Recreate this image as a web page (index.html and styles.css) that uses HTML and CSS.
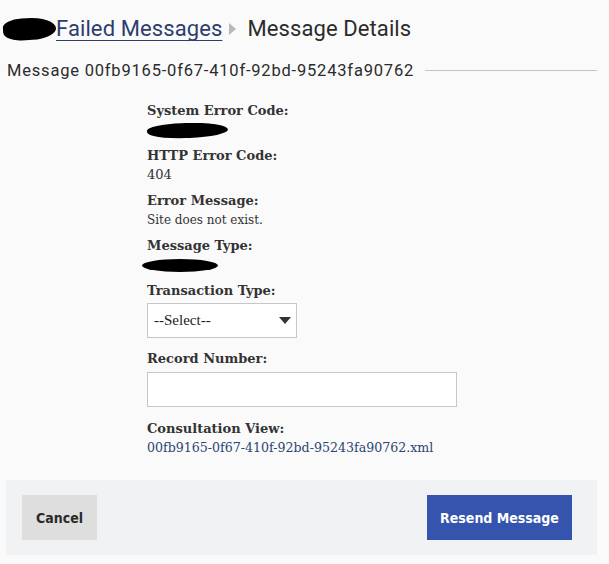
FILE: index.html
```html
<!DOCTYPE html>
<html>
<head>
<meta charset="utf-8">
<link rel="stylesheet" href="styles.css">
</head>
<body>
<div class="page">
  <h1 class="crumbs">
    <span class="redact redact-title"></span><a class="crumb-link" href="#">Failed Messages</a>
    <span class="chev"></span>
    <span class="crumb-current">Message Details</span>
  </h1>
  <div class="subtitle">
    <span class="subtitle-text">Message 00fb9165-0f67-410f-92bd-95243fa90762</span>
    <span class="rule"></span>
  </div>
  <div class="details">
    <div class="field">
      <div class="label">System Error Code:</div>
      <div class="value"><span class="redact redact-a"></span></div>
    </div>
    <div class="field">
      <div class="label">HTTP Error Code:</div>
      <div class="value">404</div>
    </div>
    <div class="field">
      <div class="label">Error Message:</div>
      <div class="value small">Site does not exist.</div>
    </div>
    <div class="field">
      <div class="label">Message Type:</div>
      <div class="value"><span class="redact redact-b"></span></div>
    </div>
    <div class="field">
      <div class="label">Transaction Type:</div>
      <div class="select">
        <span>--Select--</span>
        <span class="caret"></span>
      </div>
    </div>
    <div class="field">
      <div class="label">Record Number:</div>
      <div class="input"></div>
    </div>
    <div class="field">
      <div class="label">Consultation View:</div>
      <a class="value link" href="#">00fb9165-0f67-410f-92bd-95243fa90762.xml</a>
    </div>
  </div>
  <div class="footer">
    <button class="btn btn-cancel">Cancel</button>
    <button class="btn btn-primary">Resend Message</button>
  </div>
</div>
</body>
</html>
```
FILE: styles.css
```css
html, body {
  margin: 0;
  padding: 0;
  background: #fafafa;
}
.page {
  width: 609px;
  height: 564px;
  font-family: "Roboto", "DejaVu Sans", sans-serif;
  color: #2b2b2b;
}
.crumbs {
  margin: 0;
  padding: 14px 0 0 3px;
  height: 30px;
  display: flex;
  align-items: center;
  font-size: 22px;
  font-weight: 400;
  line-height: 30px;
}
.redact {
  display: inline-block;
  background: #000;
}
.redact-title {
  width: 53px;
  height: 22px;
  border-radius: 40% 60% 50% 45%;
  transform: rotate(-4deg);
}
.crumb-link {
  color: #2e3d6e;
  text-decoration: underline;
  text-decoration-thickness: 1px;
  text-underline-offset: 4px;
  letter-spacing: 0.1px;
}
.chev {
  width: 0;
  height: 0;
  border-top: 6px solid transparent;
  border-bottom: 6px solid transparent;
  border-left: 7px solid #b8b8b8;
  margin: 0 11px 0 7px;
}
.crumb-current {
  color: #2b2b2b;
  letter-spacing: 0.1px;
}
.subtitle {
  display: flex;
  align-items: center;
  margin: 14px 12px 0 7px;
  height: 24px;
}
.subtitle-text {
  font-size: 16.5px;
  letter-spacing: 0.8px;
  color: #2b2b2b;
  white-space: nowrap;
}
.rule {
  flex: 1;
  height: 1px;
  background: #c4c4c4;
  margin-left: 11px;
}
.details {
  margin: 20px 0 0 147px;
  font-family: "DejaVu Serif", "Liberation Serif", serif;
  color: #333;
}
.field {
  margin-bottom: 7px;
}
.label {
  font-weight: 700;
  font-size: 13px;
  line-height: 18px;
  color: #333;
}
.value {
  font-size: 13px;
  line-height: 20px;
}
.value.small {
  font-size: 12px;
  line-height: 20px;
}
.redact-a {
  width: 81px;
  height: 15px;
  border-radius: 45% 55% 50% 50%;
  vertical-align: middle;
  transform: rotate(-2deg);
}
.redact-b {
  width: 76px;
  height: 13px;
  margin-left: -5px;
  border-radius: 50%;
  vertical-align: middle;
}
.select {
  margin-top: 3px;
  width: 150px;
  height: 35px;
  border: 1px solid #c7c7c7;
  background: #fff;
  box-sizing: border-box;
  display: flex;
  align-items: center;
  justify-content: space-between;
  padding: 0 5px 0 6px;
  font-family: "Liberation Serif", serif;
  font-size: 15px;
  color: #222;
  margin-bottom: 12px;
}
.caret {
  width: 0;
  height: 0;
  border-left: 6px solid transparent;
  border-right: 6px solid transparent;
  border-top: 7px solid #333;
}
.input {
  margin-top: 4px;
  width: 310px;
  height: 35px;
  box-sizing: border-box;
  border: 1px solid #c7c7c7;
  background: #fff;
  margin-bottom: 13px;
}
.link {
  display: block;
  font-size: 12.6px;
  color: #2a4573;
  text-decoration: none;
}
.footer {
  margin: 22px 12px 0 6px;
  height: 75px;
  background: #f1f2f4;
  display: flex;
  align-items: center;
  justify-content: space-between;
  padding: 0 25px 0 16px;
  box-sizing: border-box;
}
.btn {
  border: none;
  height: 45px;
  font-family: "DejaVu Sans Condensed", "DejaVu Sans", sans-serif;
  font-weight: 700;
  font-size: 14px;
}
.btn-cancel {
  width: 75px;
  background: #dedede;
  color: #2a2a2a;
}
.btn-primary {
  width: 145px;
  background: #3454ad;
  color: #fff;
}
```
